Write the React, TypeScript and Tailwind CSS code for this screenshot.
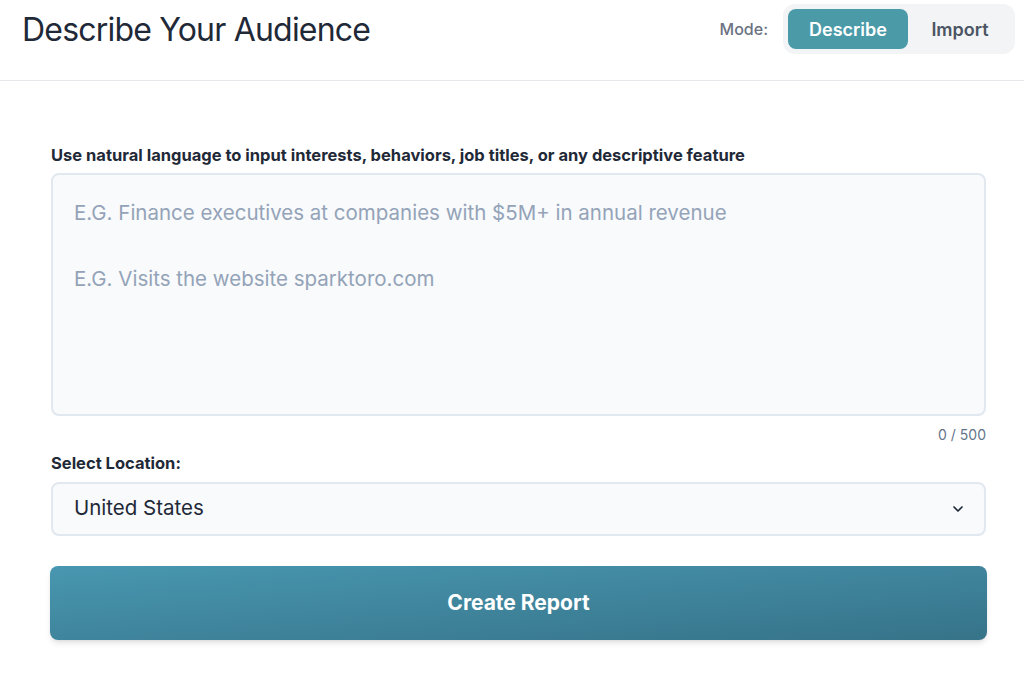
import React, { useState } from 'react';

const App: React.FC = () => {
    const [mode, setMode] = useState<'describe' | 'import'>('describe');
    const [text, setText] = useState('');

    return (
        <div className="min-h-[676px] bg-white" style={{ fontFamily: 'Inter, "Noto Sans", sans-serif' }}>
            <div className="h-[81px] border-b border-gray-200 flex items-start justify-between pl-[22px] pr-[9px]">
                <h1 className="text-[32px] font-normal text-[#1f2937] mt-[6px] tracking-tight">Describe Your Audience</h1>
                <div className="flex items-center mt-[4px]">
                    <span className="text-[16px] text-[#6b7280] font-medium mr-[15px]">Mode:</span>
                    <div className="flex bg-[#f3f4f6] rounded-xl p-[5px] gap-[2px]">
                        <button
                            onClick={() => setMode('describe')}
                            className={`w-[120px] h-[40px] rounded-lg text-[18px] font-semibold ${mode === 'describe' ? 'bg-[#4a9aa8] text-white' : 'text-[#4b5563]'}`}
                        >
                            Describe
                        </button>
                        <button
                            onClick={() => setMode('import')}
                            className={`w-[100px] h-[40px] rounded-lg text-[18px] font-semibold ${mode === 'import' ? 'bg-[#4a9aa8] text-white' : 'text-[#4b5563]'}`}
                        >
                            Import
                        </button>
                    </div>
                </div>
            </div>

            <div className="pl-[51px] pr-[38px] pt-[62px]">
                <label className="block text-[16.5px] font-bold text-[#1f2937] mb-[5px]">
                    Use natural language to input interests, behaviors, job titles, or any descriptive feature
                </label>
                <textarea
                    value={text}
                    onChange={e => setText(e.target.value.slice(0, 500))}
                    placeholder={'E.G. Finance executives at companies with $5M+ in annual revenue\n\nE.G. Visits the website sparktoro.com'}
                    className="block w-full h-[243px] resize-none rounded-lg border-2 border-[#e2e8f0] bg-[#f8fafc] px-[21px] pt-[21px] text-[20.5px] leading-[33px] text-[#1f2937] placeholder:text-[#94a3b8] outline-none"
                />
                <div className="text-right text-[14px] text-[#64748b] mt-[8px]">{text.length} / 500</div>

                <label className="block text-[16.5px] font-bold text-[#1f2937] mt-[6px] mb-[6px]">Select Location:</label>
                <div className="relative">
                    <select className="block w-full h-[54px] appearance-none rounded-lg border-2 border-[#e2e8f0] bg-[#f8fafc] px-[21px] text-[20.5px] text-[#1f2937] outline-none">
                        <option>United States</option>
                        <option>United Kingdom</option>
                        <option>Canada</option>
                    </select>
                    <svg className="absolute right-[20px] top-[19px] pointer-events-none" width="16" height="16" viewBox="0 0 24 24" fill="none" stroke="#1f2937" strokeWidth="2.5" strokeLinecap="round" strokeLinejoin="round">
                        <path d="M6 9l6 6 6-6" />
                    </svg>
                </div>

                <button className="mt-[30px] -mx-[1px] w-[calc(100%+2px)] h-[74px] rounded-lg bg-gradient-to-br from-[#4897b0] to-[#367389] text-white text-[21px] font-bold shadow-md">
                    Create Report
                </button>
            </div>
        </div>
    );
};

export default App;
